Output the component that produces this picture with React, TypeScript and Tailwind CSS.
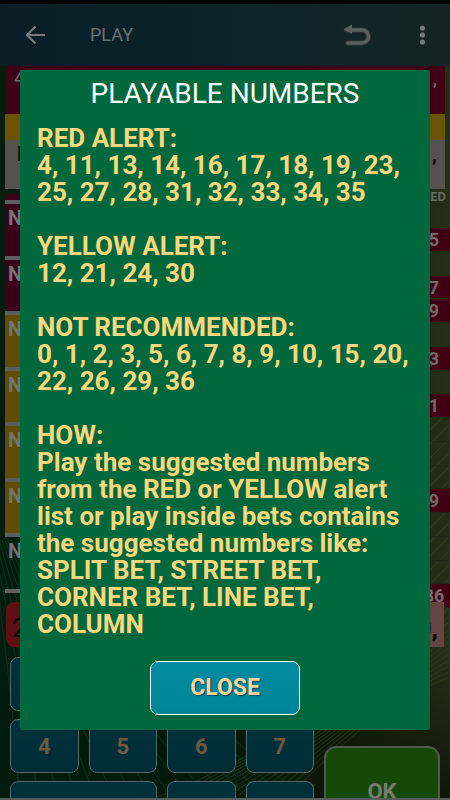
import React from "react";

const betRows = [
  { id: 1, style: "bg-[#3b0016]" },
  { id: 2, style: "bg-[#3b0016]" },
  { id: 3, style: "bg-[#5f4d02]" },
  { id: 4, style: "bg-[#5f4d02]" },
  { id: 5, style: "bg-[#5f4d02]" },
  { id: 6, style: "bg-[#5f4d02]" },
  { id: 7, style: "" },
];

const spins = ["5", "", "7", "9", "", "3", "", "1", "", "", "", "9", "", "", "", "36"];

const sections = [
  { title: "RED ALERT:", text: "4, 11, 13, 14, 16, 17, 18, 19, 23, 25, 27, 28, 31, 32, 33, 34, 35" },
  { title: "YELLOW ALERT:", text: "12, 21, 24, 30" },
  { title: "NOT RECOMMENDED:", text: "0, 1, 2, 3, 5, 6, 7, 8, 9, 10, 15, 20, 22, 26, 29, 36" },
];

function Backdrop() {
  const steps = Array.from({ length: 16 }, (_, i) => i);
  return (
    <svg className="absolute inset-0 h-full w-full" viewBox="0 0 450 800" preserveAspectRatio="none" aria-hidden="true">
      <defs>
        <linearGradient id="felt" x1="0" x2="1" y1="0" y2="0">
          <stop offset="0" stopColor="#021d0f" />
          <stop offset="0.5" stopColor="#03190b" />
          <stop offset="0.75" stopColor="#14200c" />
          <stop offset="1" stopColor="#252f17" />
        </linearGradient>
        <linearGradient id="shade" x1="0" x2="0" y1="0" y2="1">
          <stop offset="0.82" stopColor="#0c1406" stopOpacity="0" />
          <stop offset="1" stopColor="#0c1406" stopOpacity="0.9" />
        </linearGradient>
      </defs>
      <rect width="450" height="800" fill="url(#felt)" />
      <rect x="310" width="140" height="800" fill="url(#shade)" />
      <g fill="none" stroke="#2c4a1c" strokeOpacity="0.55">
        {steps.map((i) => (
          <path key={i} d={`M${150 + i * 9} 800 Q${330 + i * 4} ${735 - i * 3} 460 ${570 + i * 7}`} />
        ))}
      </g>
      <g fill="none" stroke="#39452a" strokeOpacity="0.6">
        {steps.map((i) => (
          <path key={i} d={`M420 ${440 + i * 14} L460 ${400 + i * 14}`} />
        ))}
      </g>
      <g fill="none" stroke="#0c4a28" strokeOpacity="0.5">
        {steps.map((i) => (
          <path key={i} d={`M${-10 + i * 3} 540 Q${10 + i * 8} 660 ${20 + i * 20} 810`} />
        ))}
      </g>
    </svg>
  );
}

function Key({ label, className = "" }: { label: string; className?: string }) {
  return (
    <button
      type="button"
      aria-label={label || "key"}
      className={`h-[54px] rounded-lg border border-[#5a686a] bg-linear-to-b from-[#00323c] to-[#012c36] text-[22px] font-bold text-[#705843] ${className}`}
    >
      {label}
    </button>
  );
}

export default function App() {
  return (
    <div className="relative h-screen min-h-[800px] w-full overflow-hidden bg-[#03190b] font-['Roboto',sans-serif]">
      <Backdrop />
      <div className="relative flex h-full flex-col">
        <header className="flex h-[66px] shrink-0 items-center border-t-4 border-black bg-linear-to-r from-[#0a1d26] via-[#0c2429] to-[#142426] pl-6 pr-3 text-[#747b7d]">
          <button type="button" aria-label="Back" className="w-[66px]">
            <svg width="22" height="20" viewBox="0 0 22 20" fill="none" stroke="currentColor" strokeWidth="2.2">
              <path d="M21 10H3M11.5 1.5L3 10l8.5 8.5" />
            </svg>
          </button>
          <h1 className="flex-1 text-lg text-[#6b7274]">PLAY</h1>
          <button type="button" aria-label="Undo" className="mr-[38px]">
            <svg width="30" height="24" viewBox="0 0 30 24" fill="none">
              <path d="M5 7h15a6.5 6.5 0 0 1 0 13H6" stroke="#263032" strokeWidth="6" strokeLinecap="round" />
              <path d="M6 7h14a6.500 6.500 0 0 1 0 13H6" stroke="#596163" strokeWidth="3.500" strokeLinecap="round" />
              <path d="M1.500 6.500L10 1.500v9.500z" fill="#596163" />
            </svg>
          </button>
          <button type="button" aria-label="More options" className="w-7">
            <svg width="28" height="20" viewBox="0 0 28 20" fill="currentColor">
              <circle cx="12.500" cy="3" r="2.600" />
              <circle cx="12.500" cy="10" r="2.600" />
              <circle cx="12.500" cy="17" r="2.600" />
            </svg>
          </button>
        </header>

        <section className="mx-[5px] shrink-0 text-xl">
          <div className="flex h-12 justify-between bg-[#3f0016] pl-[9px] pr-2 leading-6 text-[#76666b]">
            <span>4</span>
            <span>,</span>
          </div>
          <div className="h-[26px] bg-[#6b5300]" />
          <div className="flex h-[49px] justify-between bg-[#55514c] pl-3 pr-2 font-bold text-[#0b0b0b]">
            <span>N</span>
            <span>,</span>
          </div>
        </section>

        <div className="flex h-[410px] shrink-0 justify-between pl-[5px]">
          <div className="mt-[5px] flex h-[399px] w-24 flex-col">
            <div className="h-[6px] bg-[#3b0016]" />
            <ul className="flex flex-1 flex-col border-b-4 border-[#5f625f]">
              {betRows.map((row) => (
                <li key={row.id} className={`flex-1 border-t-4 border-[#5f5c5d] pl-[3px] text-xl font-bold text-[#747373] ${row.style}`}>
                  N
                </li>
              ))}
            </ul>
          </div>
          <div className="flex w-8 flex-col">
            <p className="h-[39px] shrink-0 pr-1 text-right text-[13px] font-bold leading-4 text-[#666c60]">ED</p>
            <ol className="flex h-[380px] shrink-0 flex-col text-lg font-bold leading-6 text-[#77686d]">
              {spins.map((spin, i) => (
                <li key={i} className={`min-h-0 flex-1 border-b border-[#202817] text-center ${spin ? "bg-[#3f0016]" : ""}`}>
                  {spin}
                </li>
              ))}
            </ol>
          </div>
        </div>

        <div className="relative flex h-[48px] shrink-0 items-end justify-between px-[6px] text-[26px] leading-[52px] text-[#0a0505]">
          <span className="h-[45px] w-12 rounded-lg bg-[#5c1013] pl-[6px]">2</span>
          <span className="h-[45px] w-12 bg-[#664442] pr-[6px] text-right font-bold">0,</span>
        </div>

        <div className="mt-[10px] flex min-h-0 flex-1 gap-[10px] px-[10px]">
          <div className="grid flex-1 auto-rows-min grid-cols-4 gap-x-[10px] gap-y-2">
            <Key label="" />
            <Key label="" />
            <Key label="" />
            <Key label="" />
            <Key label="4" />
            <Key label="5" />
            <Key label="6" />
            <Key label="7" />
            <Key label="" className="col-span-2" />
            <Key label="" />
            <Key label="" />
          </div>
          <button type="button" className="mt-[89px] h-[90px] w-[116px] rounded-xl border-2 border-[#505a4c] bg-linear-to-b from-[#184608] to-[#124c05] text-[22px] font-bold text-[#747b70]">
            OK
          </button>
        </div>
        <div className="absolute inset-x-0 bottom-0 h-[2px] bg-[#565a5a]" />
      </div>

      <div className="absolute inset-0 px-5 pt-[70px]">
        <div role="dialog" aria-modal="true" aria-labelledby="dialog-title" className="flex flex-col rounded-xs bg-[#00683c] px-[17px] pb-[15px]">
          <h2 id="dialog-title" className="h-[55px] text-center text-[28px] leading-[48px] text-white">
            PLAYABLE NUMBERS
          </h2>
          <div className="flex flex-col gap-[27px] text-[26px] font-bold leading-[27px] text-[#f9d77e]">
            {sections.map((section) => (
              <section key={section.title}>
                <h3>{section.title}</h3>
                <p>{section.text}</p>
              </section>
            ))}
            <section>
              <h3>HOW:</h3>
              <p>
                Play the suggested numbers
                <br />
                from the RED or YELLOW alert
                <br />
                list or play inside bets contains
                <br />
                the suggested numbers like:
                <br />
                SPLIT BET, STREET BET,
                <br />
                CORNER BET, LINE BET,
                <br />
                COLUMN
              </p>
            </section>
          </div>
          <button
            type="button"
            className="mt-[23px] h-[54px] w-[150px] self-center rounded-lg border border-white bg-linear-to-b from-[#008ba1] to-[#008596] text-[23px] font-bold text-[#ffd3a0] text-shadow-[1px_1px_1px_#00454f]"
          >
            CLOSE
          </button>
        </div>
      </div>
    </div>
  );
}
